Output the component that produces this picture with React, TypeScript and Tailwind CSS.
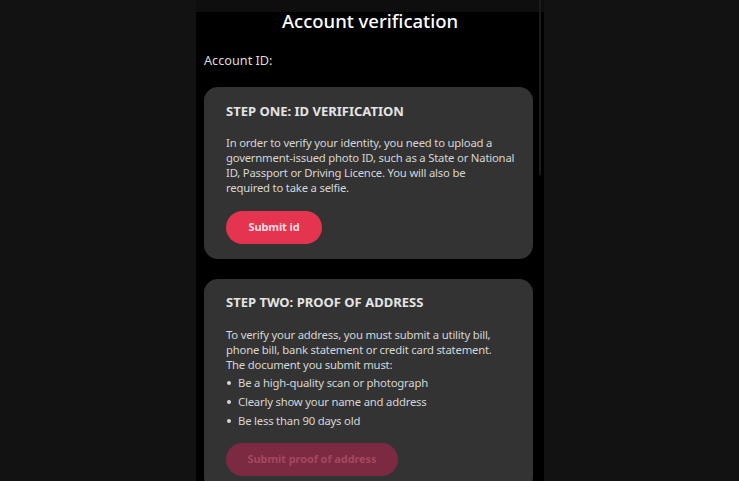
import React from "react";

const Lines = ({ lines }: { lines: string[] }) => (
  <>
    {lines.map((l) => (
      <span key={l} className="block whitespace-nowrap">
        {l}
      </span>
    ))}
  </>
);

export default function App() {
  const font = { fontFamily: '"Noto Sans", "Open Sans", sans-serif' };
  return (
    <div className="w-full h-[481px] bg-[#121212] flex justify-center overflow-hidden" style={font}>
      <div className="relative w-[348px] h-full bg-black ml-[1px]">
        <div className="absolute left-0 top-0 w-full h-[12px] bg-[#0e0e0e]" />
        <div className="absolute left-[343px] top-0 w-[2px] h-[175px] bg-[#1b1b1b]" />
        <div className="relative pt-[12px]">
          <h1 className="text-[18.5px] leading-[18px] font-medium text-white text-center">
            Account verification
          </h1>
          <div className="mt-[21px] px-[8px] text-[12.7px] leading-[18px] text-[#dcdcdc]">Account ID:</div>
          <div className="mt-[18px] ml-[8px] w-[329px] flex flex-col gap-[20px]">
            <section className="rounded-[14px] bg-[#333333] pl-[22px] pr-[18px] pt-[15px] pb-[15px]">
              <h2 className="text-[13px] leading-[18px] font-bold text-[#e4e4e4]">STEP ONE: ID VERIFICATION</h2>
              <p className="mt-[15px] text-[11.3px] tracking-[-0.2px] leading-[15px] text-[#d6d6d6]">
                <Lines
                  lines={[
                    "In order to verify your identity, you need to upload a",
                    "government-issued photo ID, such as a State or National",
                    "ID, Passport or Driving Licence. You will also be",
                    "required to take a selfie.",
                  ]}
                />
              </p>
              <button className="mt-[16px] w-[96px] h-[33px] rounded-full bg-[#e5344f] text-[11px] tracking-[-0.1px] font-bold text-[#f8dde1]">
                Submit id
              </button>
            </section>
            <section className="rounded-[14px] bg-[#333333] pl-[22px] pr-[18px] pt-[14px] pb-[15px]">
              <h2 className="text-[13px] leading-[18px] font-bold text-[#e4e4e4]">STEP TWO: PROOF OF ADDRESS</h2>
              <p className="mt-[16px] text-[11.3px] tracking-[-0.2px] leading-[15px] text-[#d6d6d6]">
                <Lines
                  lines={[
                    "To verify your address, you must submit a utility bill,",
                    "phone bill, bank statement or credit card statement.",
                    "The document you submit must:",
                  ]}
                />
              </p>
              <ul className="mt-[1px] text-[11.3px] tracking-[-0.2px] leading-[19px] text-[#d6d6d6]">
                {["Be a high-quality scan or photograph", "Clearly show your name and address", "Be less than 90 days old"].map((t) => (
                  <li key={t} className="flex items-center">
                    <span className="ml-[1px] w-[4px] h-[4px] rounded-full bg-[#d6d6d6]" />
                    <span className="ml-[7px]">{t}</span>
                  </li>
                ))}
              </ul>
              <button className="mt-[13px] w-[172px] h-[33px] rounded-full bg-[#7c2a42] text-[11px] tracking-[-0.1px] font-bold text-[#a4475f]">
                Submit proof of address
              </button>
            </section>
          </div>
        </div>
      </div>
    </div>
  );
}
